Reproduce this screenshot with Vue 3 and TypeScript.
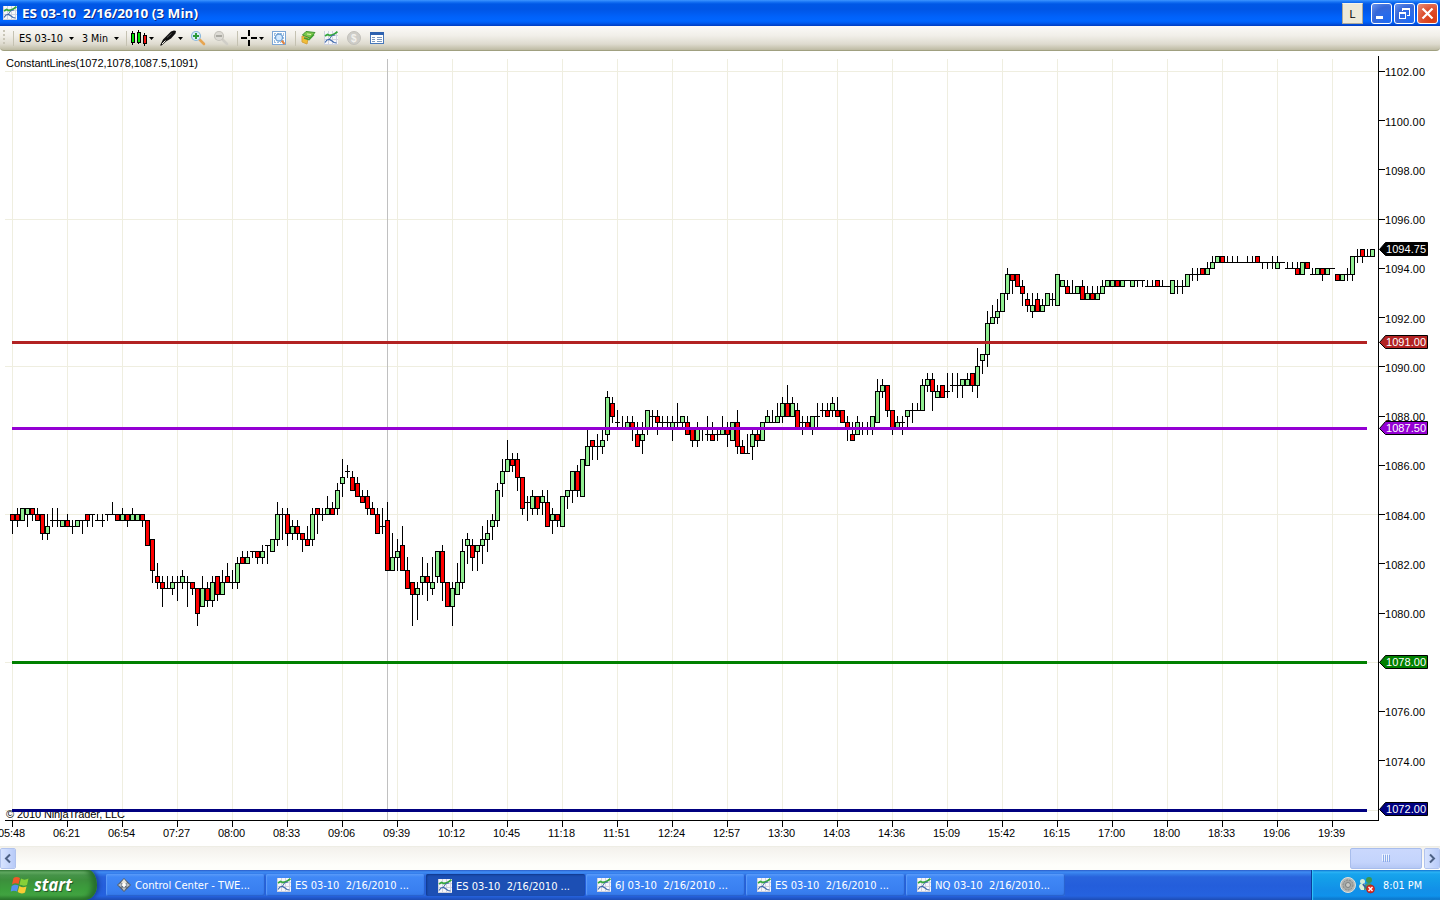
<script setup lang="ts">
interface Candle {
  x: number
  high: number
  top: number
  bottom: number
  low: number
  kind: string
}

// One entry per three-minute bar: high, body top, body bottom, low (ticks below 1102), then g / r / d.
const bars = `
72 72 73 75 r,71 72 73 74 r,71 71 73 73 g,71 71 72 74 g,71 71 72 73 r,71 72 73 73 r,72 72 75 76 r,72 74 75 76 g,71 73 73 74 d,71 73 73 74 d,
73 73 74 74 g,72 73 74 74 r,73 74 74 75 d,73 73 74 74 g,73 73 73 75 d,72 72 73 74 r,72 72 72 74 d,72 73 73 73 d,72 73 73 74 d,72 72 72 73 d,
70 72 72 72 d,72 72 73 73 r,71 72 73 73 g,72 72 73 74 r,71 72 73 73 g,72 72 73 73 g,72 72 73 74 r,73 73 77 77 r,76 76 81 83 r,80 82 83 84 r,
82 83 84 87 r,82 84 84 84 d,82 83 84 85 g,82 83 83 86 d,81 82 83 84 g,82 83 83 87 d,83 83 84 85 r,84 84 88 90 r,82 84 87 87 g,83 84 86 87 r,
82 83 86 87 g,82 82 85 86 r,81 83 85 85 g,80 82 83 83 r,81 83 83 84 d,79 80 83 84 g,78 79 80 80 r,78 79 80 80 g,78 78 78 79 d,78 78 79 80 r,
77 78 79 80 g,77 77 77 80 d,76 76 78 78 g,70 72 76 77 g,71 72 72 76 d,71 72 75 77 r,73 74 75 76 g,73 74 75 76 r,75 75 76 78 r,74 76 77 77 r,
71 72 76 77 g,71 71 72 75 r,71 72 72 73 d,69 71 72 72 g,70 71 72 72 r,67 68 71 72 g,63 66 67 69 g,64 65 65 66 d,65 66 68 68 r,66 67 69 69 r,
68 69 70 70 r,68 69 71 72 r,70 71 72 72 r,71 72 75 75 r,71 74 74 75 d,70 73 81 81 r,75 79 81 81 g,76 78 79 81 g,74 77 81 81 r,79 81 84 84 r,
83 83 85 90 r,83 84 85 89 g,79 82 83 85 g,80 82 83 86 r,79 83 84 85 g,78 78 82 83 g,77 78 83 86 r,83 83 87 87 r,83 84 87 90 g,80 83 85 85 g,
76 78 83 84 g,75 76 77 80 g,76 77 79 81 r,77 77 78 81 g,74 76 77 80 g,73 75 76 78 g,72 73 74 76 g,67 68 73 74 g,63 65 67 69 g,60 63 65 65 g,
62 63 64 65 r,62 63 66 68 r,66 66 71 72 r,69 70 70 73 d,68 69 71 72 g,69 69 71 72 r,68 69 70 72 g,68 70 74 74 r,71 72 73 75 g,72 72 73 74 r,
69 69 74 74 g,68 68 69 71 g,65 65 68 70 g,64 65 68 69 r,63 63 69 69 g,58 61 64 64 g,60 60 61 63 r,59 61 61 63 d,58 60 61 62 g,52 53 59 60 g,
53 54 56 57 r,55 57 57 58 d,56 58 58 58 d,56 57 58 58 g,56 57 58 60 r,57 59 61 61 r,57 59 60 62 g,55 55 58 59 g,55 56 56 58 d,55 56 57 59 r,
56 57 57 58 d,56 57 57 58 d,56 57 58 60 g,54 57 57 58 d,56 56 57 58 g,56 57 59 59 r,58 58 60 61 r,57 58 60 61 g,58 58 58 60 d,56 59 59 60 d,
57 59 60 60 r,58 59 59 60 d,56 58 59 59 g,57 58 59 61 r,57 57 60 60 g,55 57 61 62 r,60 61 62 62 r,59 62 62 62 d,58 59 61 63 g,58 59 60 61 r,
57 57 60 60 g,55 56 57 57 g,55 57 57 57 d,54 56 57 57 g,53 54 56 57 g,51 54 56 56 r,53 54 56 56 g,54 55 58 58 r,56 57 57 59 d,56 57 58 58 r,
56 56 58 59 g,54 56 56 58 d,54 55 55 56 d,54 55 56 56 r,53 54 55 56 g,53 55 56 56 r,55 55 57 57 r,56 57 58 60 r,57 59 60 60 r,56 57 59 59 g,
57 58 58 59 d,57 58 58 59 d,56 56 58 59 g,50 52 57 57 g,50 51 52 53 g,51 51 55 56 r,55 55 58 59 r,56 57 58 58 g,56 57 57 59 d,55 55 56 58 g,
54 55 55 57 d,54 55 55 55 d,50 51 55 55 g,49 50 51 52 g,49 50 52 55 r,51 52 53 53 g,51 51 53 53 r,49 52 52 53 d,49 51 51 52 d,49 51 51 53 d,
50 50 51 53 g,49 50 51 51 g,49 49 51 52 r,45 48 51 53 g,46 46 47 49 g,39 41 46 48 g,38 40 41 41 g,37 39 40 41 g,36 36 39 39 g,32 33 36 37 g,
33 33 34 36 r,33 33 35 35 r,34 35 36 38 r,36 37 38 39 r,36 38 39 40 g,36 37 39 39 r,37 38 39 39 g,36 36 38 38 g,36 37 37 38 d,33 33 38 38 g,
34 34 35 35 g,34 35 36 36 r,34 36 36 36 d,35 35 36 36 g,34 35 37 37 r,35 36 37 37 g,35 36 37 37 r,35 36 37 37 g,34 35 36 36 g,34 34 35 35 g,
34 34 35 35 g,34 34 35 35 r,34 34 35 35 g,34 34 34 34 d,34 34 35 35 g,34 34 34 35 d,34 34 34 35 d,34 35 35 35 d,34 35 35 35 d,34 34 35 35 r,
34 35 35 35 d,35 35 35 35 d,34 34 36 36 g,34 35 35 36 d,34 35 35 36 d,33 33 35 35 g,32 33 33 34 d,32 33 33 34 d,32 32 33 33 r,31 32 33 33 g,
30 31 32 32 g,30 30 31 31 g,30 30 31 31 r,30 31 31 31 d,30 31 31 31 d,30 31 31 31 d,31 31 31 31 d,30 31 31 31 d,30 31 31 31 d,30 30 31 31 r,
31 31 31 32 d,31 31 31 32 d,30 31 31 32 d,30 31 32 32 g,31 31 31 31 d,31 32 32 32 d,31 32 32 32 d,31 32 33 33 r,31 31 33 33 g,31 31 32 32 r,
32 33 33 33 d,32 32 33 33 g,32 32 33 34 r,32 32 33 33 g,32 32 32 32 d,33 33 34 34 r,33 33 34 34 g,32 33 33 34 d,30 30 33 34 g,29 30 30 31 d,
29 29 30 31 r,29 30 30 30 d,29 29 30 30 g`

const exactY = (price: number): number => 71 + 6.155 * (1102 - price) * 4
const tickY = (t: number): number => Math.round(71 + 6.155 * t)
const priceBaseline = (price: number): number => Math.ceil(exactY(price) - 0.15) + 5

const candles: Candle[] = bars.split(',').map((entry, i) => {
  const f = entry.trim().split(' ')
  return {
    x: 12 + i * 5,
    high: tickY(Number(f[0])),
    top: tickY(Number(f[1])),
    bottom: tickY(Number(f[2])),
    low: tickY(Number(f[3])),
    kind: f[4],
  }
})

const fills: Record<string, string> = { g: '#90ee90', r: '#ff0000', d: '#000000' }

const times: string[] = ['05:48', '06:21', '06:54', '07:27', '08:00', '08:33', '09:06', '09:39', '10:12', '10:45', '11:18', '11:51', '12:24', '12:57', '13:30', '14:03', '14:36', '15:09', '15:42', '16:15', '17:00', '18:00', '18:33', '19:06', '19:39']

const gridRows = [1102, 1096, 1090, 1084, 1078, 1072].map((p) => tickY((1102 - p) * 4))
const prices: number[] = [1102, 1100, 1098, 1096, 1094, 1092, 1090, 1088, 1086, 1084, 1082, 1080, 1076, 1074]

const levels = [
  { price: '1091.00', y: 342, color: '#b22222' },
  { price: '1087.50', y: 428, color: '#9400d3' },
  { price: '1078.00', y: 662, color: '#008000' },
  { price: '1072.00', y: 810, color: '#000080' },
]
const flags = [
  { price: '1094.75', y: 249, color: '#000000' },
  { price: '1091.00', y: 342, color: '#b22222' },
  { price: '1087.50', y: 428, color: '#9400d3' },
  { price: '1078.00', y: 662, color: '#008000' },
  { price: '1072.00', y: 809, color: '#000080' },
]

const tasks = [
  { label: 'Control Center - TWE...', width: 115, active: false, center: true },
  { label: 'ES 03-10\u00a0 2/16/2010 ...', width: 114, active: false, center: false },
  { label: 'ES 03-10\u00a0 2/16/2010 ...', width: 114, active: true, center: false },
  { label: '6J 03-10\u00a0 2/16/2010 ...', width: 113, active: false, center: false },
  { label: 'ES 03-10\u00a0 2/16/2010 ...', width: 114, active: false, center: false },
  { label: 'NQ 03-10\u00a0 2/16/2010...', width: 115, active: false, center: false },
]
</script>

<template>
  <div class="desktop">
    <svg class="defs" width="0" height="0">
      <symbol id="chart-icon" viewBox="0 0 14 14">
        <rect width="14" height="14" fill="#f6f6fa" />
        <path d="M.5 0V13.500H14M4.500 0V13M8.500 0V13M12.500 0V13M0 4.500H14M0 8.500H14" fill="none" stroke="#cfd2de" shape-rendering="crispEdges" />
        <path d="M1 11.500L3 9L5.500 8.500L8 10L10 11.500L12.500 12" fill="none" stroke="#3d68ac" stroke-width="1.200" />
        <path d="M1 5L3.500 3.500L6 4.500L8.500 4L11 2.500L13.500 .8" fill="none" stroke="#35a83c" stroke-width="1.800" />
        <path d="M5.500 8L8 4.500L11 4" fill="none" stroke="#4a71ab" />
      </symbol>
    </svg>

    <header class="titlebar">
      <svg class="app-icon" width="14" height="14"><use href="#chart-icon" /></svg>
      <svg class="caption" width="190" height="26">
        <text x="1" y="19" textLength="176" lengthAdjust="spacingAndGlyphs" class="cap-shadow">ES 03-10&#160; 2/16/2010 (3 Min)</text>
        <text x="0" y="18" textLength="176" lengthAdjust="spacingAndGlyphs" class="cap-text">ES 03-10&#160; 2/16/2010 (3 Min)</text>
      </svg>
      <div class="link-box">L</div>
      <div class="win-buttons">
        <div class="win-btn"><svg width="19" height="19"><rect x="4" y="12" width="7" height="3" fill="#fff" /></svg></div>
        <div class="win-btn"><svg width="19" height="19" fill="none" stroke="#fff" shape-rendering="crispEdges"><path d="M7.500 7V4.500H14.500V11.500H12M7 5.500H15" /><path d="M4.500 8.500H10.500V14.500H4.500ZM4 9.500H11" /></svg></div>
        <div class="win-btn close"><svg width="19" height="19"><path d="M4.500 4.500L14.500 14.500M14.500 4.500L4.500 14.500" stroke="#fff" stroke-width="2.200" /></svg></div>
      </div>
    </header>

    <div class="toolbar">
      <svg width="400" height="25">
        <g fill="#c9c6b8"><rect x="3" y="4" width="2" height="2" /><rect x="3" y="8" width="2" height="2" /><rect x="3" y="12" width="2" height="2" /><rect x="3" y="16" width="2" height="2" /></g>
        <path d="M13.500 5V20M126.500 5V20M237.500 5V20M295.500 5V20" stroke="#c5c2b2" />
        <text x="19" y="16" textLength="44" lengthAdjust="spacingAndGlyphs" class="tool-text">ES 03-10</text>
        <text x="82" y="16" textLength="26" lengthAdjust="spacingAndGlyphs" class="tool-text">3 Min</text>
        <path d="M69 11H74L71.500 14ZM114 11H119L116.500 14ZM149 11H154L151.500 14ZM178 11H183L180.500 14ZM259 11H264L261.500 14Z" fill="#000" />
        <!-- candlestick style -->
        <g stroke="#000" shape-rendering="crispEdges">
          <path d="M132.500 5V19M138.500 4V18M144.500 7V20" />
          <rect x="131" y="7" width="3" height="9" fill="#00e000" />
          <rect x="137" y="6" width="3" height="10" fill="#00e000" />
          <rect x="143" y="9" width="3" height="8" fill="#f01010" />
        </g>
        <!-- pen -->
        <path d="M160 19.500L163 13.500L171 5.500L174 4.500L176 5L175.500 7.500L171 12.500L166 15.500L161.500 19.500Z" fill="#111" />
        <path d="M162 18L165.500 14.500" stroke="#f1efe6" />
        <path d="M167 11.500L171.500 7.500" stroke="#777" stroke-width=".7" />
        <!-- zoom in -->
        <path d="M199.500 13.500L204 18" stroke="#e6a552" stroke-width="2.600" stroke-linecap="round" />
        <circle cx="196" cy="10" r="4.500" fill="#d8edfa" stroke="#8ab8dc" stroke-width="1.200" />
        <path d="M193 10H199M196 7V13" stroke="#2b9a3a" stroke-width="2" />
        <!-- zoom out, disabled -->
        <path d="M222.500 13.500L227 18" stroke="#d0cec7" stroke-width="2.600" stroke-linecap="round" />
        <circle cx="219" cy="10" r="4.500" fill="#dddbd5" stroke="#c4c2bb" stroke-width="1.200" />
        <path d="M216 10H222" stroke="#aaa9a2" stroke-width="2" />
        <!-- crosshair -->
        <path d="M241 12H247M251 12H257M249 4V10M249 14V20" stroke="#000" stroke-width="2" shape-rendering="crispEdges" />
        <!-- data box -->
        <rect x="272.500" y="5.500" width="13" height="13" fill="#fff" stroke="#7ba7d6" />
        <path d="M274.500 8V17M283.500 8V16M274 7.500H284M274 16.500H281" stroke="#9bbde0" stroke-dasharray="2 1" />
        <path d="M281.500 14.500L284.500 18" stroke="#df8241" stroke-width="2" />
        <circle cx="279" cy="11.500" r="3.500" fill="#d4eaff" stroke="#6c9fd3" stroke-width="1.300" />
        <!-- chart trader -->
        <path d="M302 10L308 12L307 18L302 16Z" fill="#f1be36" stroke="#d6a23a" />
        <path d="M302.500 9L306 5.500L315 6.500L310 12Z" fill="#7cc84a" stroke="#3c9430" />
        <path d="M304 12L309 13.500L314 8.500" fill="none" stroke="#3f9f30" stroke-width="1.600" />
        <path d="M307 8L311 8.500" stroke="#e0f4ba" />
        <svg x="324" y="5" width="14" height="14"><use href="#chart-icon" /></svg>
        <circle cx="354" cy="12" r="6.500" fill="#cecdc8" stroke="#c2c0ba" />
        <text x="351" y="16" class="dollar">$</text>
        <!-- properties -->
        <rect x="370.500" y="6.500" width="13" height="11" fill="#fff" stroke="#4878ba" />
        <rect x="370" y="6" width="14" height="3" fill="#2e62b0" />
        <path d="M372 11.500H375M372 13.500H375M372 15.500H375M377 11.500H382M377 13.500H382M377 15.500H382" stroke="#7c98bf" />
      </svg>
    </div>

    <main class="chart">
      <svg width="1440" height="795" viewBox="0 51 1440 795">
        <g shape-rendering="crispEdges">
          <rect v-for="y in gridRows" :key="'h' + y" x="5" :y="y" width="1373" height="1" fill="#efeee0" />
          <rect v-for="(t, i) in times" :key="'v' + t" :x="12 + i * 55" y="59" width="1" height="761" fill="#efeee0" />
          <rect x="387" y="59" width="1" height="761" fill="#c0c0c0" />
          <g v-for="c in candles" :key="c.x">
            <rect :x="c.x" :y="c.high" width="1" :height="c.low - c.high + 1" fill="#000" />
            <rect :x="c.x - 2" :y="c.top" width="5" :height="c.bottom - c.top + 1" fill="#000" />
            <rect v-if="c.kind !== 'd'" :x="c.x - 1" :y="c.top + 1" width="3" :height="c.bottom - c.top - 1" :fill="fills[c.kind]" />
          </g>
        </g>
        <text x="6" y="67" class="label" textLength="192">ConstantLines(1072,1078,1087.5,1091)</text>
        <text x="6" y="818" class="label" textLength="119">© 2010 NinjaTrader, LLC</text>
        <g shape-rendering="crispEdges">
          <rect v-for="l in levels" :key="l.price" x="12" :y="l.y - 1" width="1355" height="3" :fill="l.color" />
          <rect x="1378" y="56" width="1" height="765" fill="#000" />
          <rect x="5" y="820" width="1374" height="1" fill="#000" />
          <rect v-for="(t, i) in times" :key="'k' + t" :x="12 + i * 55" y="821" width="1" height="6" fill="#000" />
          <rect v-for="p in prices" :key="'p' + p" x="1379" :y="tickY((1102 - p) * 4)" width="6" height="1" fill="#000" />
        </g>
        <text v-for="(t, i) in times" :key="'t' + t" :x="-2 + i * 55" y="837" class="label" textLength="27">{{ t }}</text>
        <text v-for="p in prices" :key="'l' + p" x="1385" :y="priceBaseline(p)" class="label" textLength="40">{{ p }}.00</text>
        <g v-for="f in flags" :key="'f' + f.price">
          <path :d="`M1379.500 ${f.y + 0.5}L1385.500 ${f.y - 6.5}H1427.500V${f.y + 6.5}H1385.500Z`" :fill="f.color" stroke="#000" />
          <text x="1386" :y="f.y + 4" class="label flag" textLength="40">{{ f.price }}</text>
        </g>
      </svg>
    </main>

    <div class="scrollbar">
      <div class="arrow"><svg width="14" height="19"><path d="M9 5.500L5 9.500L9 13.500" fill="none" stroke="#4d6185" stroke-width="2" /></svg></div>
      <div class="track"></div>
      <div class="thumb"><i></i><i></i><i></i><i></i></div>
      <div class="arrow"><svg width="14" height="19"><path d="M5 5.500L9 9.500L5 13.500" fill="none" stroke="#4d6185" stroke-width="2" /></svg></div>
    </div>

    <footer class="taskbar">
      <div class="start">
        <svg width="97" height="30">
          <g transform="translate(10.500 5.500)">
            <path d="M3 2.500C5 1 7 1 9.500 2.500L8 8.500C6 7.500 4 7.500 1.500 9Z" fill="#f0582a" />
            <path d="M10.500 3C13 4.500 15 4.500 18 3L16.500 9.500C14 10.500 12 10.500 9 9Z" fill="#86d038" />
            <path d="M1.200 10.500C4 9 5.500 9 8 10L6.500 16C4.500 15 2.500 15 .2 16Z" fill="#5590ee" />
            <path d="M8.800 10.500C11 12 13.500 12 16 11L14.500 17C12 18.500 9.500 18 7.200 16.500Z" fill="#f8cc35" />
          </g>
          <text x="35" y="22" textLength="38" lengthAdjust="spacingAndGlyphs" class="start-shadow">start</text>
          <text x="34" y="21" textLength="38" lengthAdjust="spacingAndGlyphs" class="start-text">start</text>
        </svg>
      </div>
      <div class="tasks">
        <div v-for="(t, i) in tasks" :key="i" class="task" :class="{ active: t.active }">
          <svg v-if="t.center" width="14" height="14"><path d="M7 0L14 7L7 14L0 7Z" fill="#54606d" /><path d="M7 1L10 4.500L7 7L4 4.500Z" fill="#e6e3d9" /><path d="M1 7L4.500 4.500V9.500ZM13 7L9.500 4.500V9.500ZM7 13L4.500 9.500H9.500Z" fill="#b8bdc2" /><path d="M7 4.500L9.500 7L7 9.500L4.500 7Z" fill="#fff" /></svg>
          <svg v-else width="14" height="14"><use href="#chart-icon" /></svg>
          <svg width="118" height="20"><text x="0" y="14" :textLength="t.width" lengthAdjust="spacingAndGlyphs" class="task-text">{{ t.label }}</text></svg>
        </div>
      </div>
      <div class="tray">
        <svg width="128" height="30">
          <circle cx="36" cy="15" r="7.500" fill="#b5b7b5" stroke="#e0e1dc" />
          <circle cx="36" cy="15" r="5" fill="#a5a8a6" stroke="#858988" stroke-dasharray="2 1" />
          <circle cx="36" cy="15" r="2.500" fill="#c7c8c4" stroke="#7c8080" />
          <circle cx="50.500" cy="11.500" r="2.500" fill="#d5edda" /><path d="M47 17Q47 13 51 13.500Q55 14 54 20L49 20Z" fill="#dcefd8" />
          <circle cx="57" cy="10" r="3" fill="#3c9650" /><path d="M52 20Q52 13 57 13Q61 14 61 19Z" fill="#48966a" /><path d="M51 14L54 18" stroke="#3562a7" stroke-width="2" />
          <circle cx="58.500" cy="19" r="4" fill="#e32a20" stroke="#a81610" stroke-width=".6" />
          <path d="M56.500 17L60.500 21M60.500 17L56.500 21" stroke="#fff" stroke-width="1.400" />
          <text x="71" y="19" textLength="39" lengthAdjust="spacingAndGlyphs" class="task-text">8:01 PM</text>
        </svg>
      </div>
    </footer>
  </div>
</template>

<style>
html, body { overflow: hidden; background: #fff; }
</style>

<style scoped>
.desktop { width: 1440px; height: 900px; display: flex; flex-direction: column; overflow: hidden; background: #fff; font-family: "Liberation Sans", Arial, sans-serif; }
.desktop svg { display: block; flex: none; }
.desktop svg.defs { display: none; }
.titlebar { height: 26px; flex: none; box-sizing: border-box; display: flex; align-items: center; padding: 0 2px 0 3px; background: linear-gradient(#3d95ff 0, #1672f4 2px, #0058e6 4px, #0055e5 9px, #0062fb 17px, #0066ff 21px, #005bf0 23px, #0046d0 25px, #003dc0 26px); }
.app-icon { margin-right: 5px; }
.cap-text, .cap-shadow { font: bold 12.5px "Open Sans", "Noto Sans", sans-serif; fill: #fff; }
.cap-shadow { fill: #0a2c86; }
.link-box { margin-left: auto; margin-right: 8px; width: 21px; height: 21px; box-sizing: border-box; border: 1px solid #aca899; border-top-color: #f6f4e9; background: #ece9d8; font-size: 11px; line-height: 20px; text-align: center; color: #000; }
.win-buttons { display: flex; gap: 2px; }
.win-btn { width: 21px; height: 21px; box-sizing: border-box; border: 1px solid #fff; border-radius: 3px; background: radial-gradient(circle at 80% 85%, #1d6af2, #2f6be5 40%, #3667d8 60%, #6d96ed 100%); }
.win-btn.close { background: radial-gradient(circle at 75% 80%, #d83b12, #dd5131 50%, #e8917d 100%); }
.toolbar { height: 25px; flex: none; box-sizing: border-box; border-bottom: 1px solid #a0a080; border-radius: 0 0 4px 4px; background: linear-gradient(#fbfaf8, #f1efe9 40%, #dedbcf 75%, #bdbaa3); }
.tool-text { font: 11px "DejaVu Sans Condensed", "DejaVu Sans", sans-serif; fill: #000; }
.dollar { font: bold 10px "Liberation Sans", sans-serif; fill: #f2f1ed; }
.chart { height: 795px; flex: none; }
.label { font: 11px "Liberation Sans", Arial, sans-serif; fill: #000; }
.flag { fill: #fff; }
.scrollbar { height: 24px; flex: none; box-sizing: border-box; border-top: 1px solid #eeede5; display: flex; align-items: center; background: linear-gradient(#f3f1ec, #fefefb 80%); }
.arrow { width: 16px; height: 21px; box-sizing: border-box; border: 1px solid #fff; outline: 1px solid #b1c3ed; outline-offset: -1px; border-radius: 2px; background: linear-gradient(90deg, #d7e3ff, #b8cbf8); flex: none; }
.track { flex: 1; }
.thumb { width: 72px; height: 21px; margin-right: 2px; box-sizing: border-box; border: 1px solid #a8bdec; border-radius: 2px; background: linear-gradient(#cad8fd, #c4d4fc 70%, #b5c8f5); display: flex; align-items: center; justify-content: center; gap: 1px; }
.thumb i { width: 1px; height: 7px; background: #8cabe9; box-shadow: -1px -1px 0 #eef4fe; }
.taskbar { height: 30px; flex: none; display: flex; background: linear-gradient(#2a5cc9 0, #3f8cf3 2px, #337ae8 4px, #2863dc 7px, #245edb 16px, #2562df 26px, #1d4cb5 30px); }
.start { width: 97px; border-radius: 0 9px 12px 0 / 0 15px 15px 0; background: linear-gradient(#3c8440 0, #6db46c 2px, #47944a 5px, #3c8f3c 10px, #3c9f3c 20px, #41a341 25px, #2b782b 30px); box-shadow: inset -5px 0 5px #276f2b, 2px 0 4px #173e9a; clip-path: inset(0 -6px 0 0); }
.start-text, .start-shadow { font: italic bold 18px "Open Sans", "Noto Sans", sans-serif; fill: #fff; }
.start-shadow { fill: #235c29; }
.tasks { display: flex; gap: 1px; margin-left: 9px; padding-top: 4px; }
.task { width: 159px; height: 22px; box-sizing: border-box; border-radius: 2px; padding-left: 11px; display: flex; align-items: center; gap: 4px; background: linear-gradient(#5a9bf9 0, #4088f6 3px, #397ff0 17px, #3478e8 22px); box-shadow: inset -1px -1px 1px #2961cd, inset 1px 0 1px #5c9cf8; }
.task.active { background: #1c4fb4; padding-top: 2px; padding-left: 12px; box-shadow: inset 1px 1px 2px #10388b; }
.task-text { font: 11px "DejaVu Sans Condensed", "DejaVu Sans", sans-serif; fill: #fff; }
.tray { width: 128px; margin-left: auto; border-left: 1px solid #0b3c9a; background: linear-gradient(#0d68ca 0, #2cb4f4 2px, #18a4ee 4px, #139ee9 9px, #1290e8 20px, #0f92eb 26px, #0b70c4 30px); box-shadow: inset 1px 0 1px #35c8f8; }
</style>
